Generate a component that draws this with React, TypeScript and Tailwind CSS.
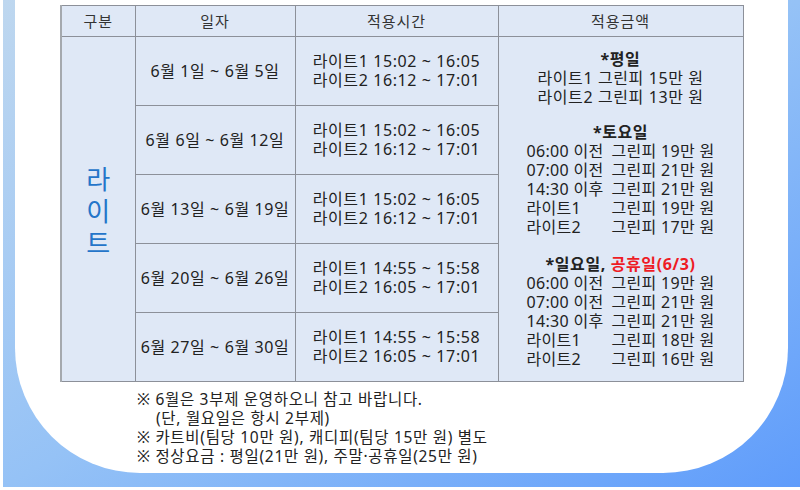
const font = { fontFamily: '"Noto Sans", "Noto Sans CJK KR", sans-serif' };

const dates = [
  { d: '6월 1일 ~ 6월 5일', t1: '15:02 ~ 16:05', t2: '16:12 ~ 17:01' },
  { d: '6월 6일 ~ 6월 12일', t1: '15:02 ~ 16:05', t2: '16:12 ~ 17:01' },
  { d: '6월 13일 ~ 6월 19일', t1: '15:02 ~ 16:05', t2: '16:12 ~ 17:01' },
  { d: '6월 20일 ~ 6월 26일', t1: '14:55 ~ 15:58', t2: '16:05 ~ 17:01' },
  { d: '6월 27일 ~ 6월 30일', t1: '14:55 ~ 15:58', t2: '16:05 ~ 17:01' },
];

const saturday = [
  ['06:00 이전', '그린피 19만 원'],
  ['07:00 이전', '그린피 21만 원'],
  ['14:30 이후', '그린피 21만 원'],
  ['라이트1', '그린피 19만 원'],
  ['라이트2', '그린피 17만 원'],
];

const sunday = [
  ['06:00 이전', '그린피 19만 원'],
  ['07:00 이전', '그린피 21만 원'],
  ['14:30 이후', '그린피 21만 원'],
  ['라이트1', '그린피 18만 원'],
  ['라이트2', '그린피 16만 원'],
];

function PriceList({ rows }: { rows: string[][] }) {
  return (
    <div className="grid grid-cols-[85px_auto] justify-center text-left tracking-[0.3px]">
      {rows.map(([a, b], i) => (
        <div key={i} className="contents">
          <span>{a}</span>
          <span>{b}</span>
        </div>
      ))}
    </div>
  );
}

export default function App() {
  const cell = 'border border-[#8c9099]';
  return (
    <div className="w-[800px] h-[490px] bg-white overflow-hidden" style={font}>
      <div className="ml-[3px] h-[487px] bg-gradient-to-br from-[#bed7ef] via-[#95c2f6] to-[#5f9cfb] px-[12px]">
        <div className="h-[473px] bg-white rounded-b-[125px] pl-[45px] pt-[5px] text-[#222]">
          <table className="border-collapse bg-[#dfe8f6] text-[16px] tracking-[0.6px] leading-[19px] text-center">
            <thead>
              <tr className="h-[31px] text-[15px] tracking-[1px] text-[#333]">
                <th className={`${cell} border-l-2 border-l-[#a5a9ae] w-[74px] font-normal`}>구분</th>
                <th className={`${cell} w-[160px] font-normal`}>일자</th>
                <th className={`${cell} w-[203px] font-normal`}>적용시간</th>
                <th className={`${cell} w-[245px] font-normal`}>적용금액</th>
              </tr>
            </thead>
            <tbody>
              {dates.map((r, i) => (
                <tr key={i} className="h-[69px]">
                  {i === 0 && (
                    <td rowSpan={5} className={`${cell} border-l-2 border-l-[#a5a9ae] text-[#2475c9] text-[26px] tracking-normal leading-[32px] pt-[4px]`}>
                      라<br />이<br />트
                    </td>
                  )}
                  <td className={cell}>{r.d}</td>
                  <td className={cell}>
                    <div>라이트1 {r.t1}</div>
                    <div>라이트2 {r.t2}</div>
                  </td>
                  {i === 0 && (
                    <td rowSpan={5} className={`${cell} align-top pt-[13px]`}>
                      <div className="font-bold">*평일</div>
                      <div>라이트1 그린피 15만 원</div>
                      <div>라이트2 그린피 13만 원</div>
                      <div className="font-bold mt-[16px]">*토요일</div>
                      <PriceList rows={saturday} />
                      <div className="font-bold mt-[18px]">
                        *일요일, <span className="text-[#ee1c25]">공휴일(6/3)</span>
                      </div>
                      <PriceList rows={sunday} />
                    </td>
                  )}
                </tr>
              ))}
            </tbody>
          </table>
          <div className="ml-[77px] mt-[8px] text-[15.5px] tracking-[0.7px] leading-[19px] text-[#222]">
            <div>※ 6월은 3부제 운영하오니 참고 바랍니다.</div>
            <div className="pl-[19px]">(단, 월요일은 항시 2부제)</div>
            <div>※ 카트비(팀당 10만 원), 캐디피(팀당 15만 원) 별도</div>
            <div>※ 정상요금 : 평일(21만 원), 주말·공휴일(25만 원)</div>
          </div>
        </div>
      </div>
    </div>
  );
}
